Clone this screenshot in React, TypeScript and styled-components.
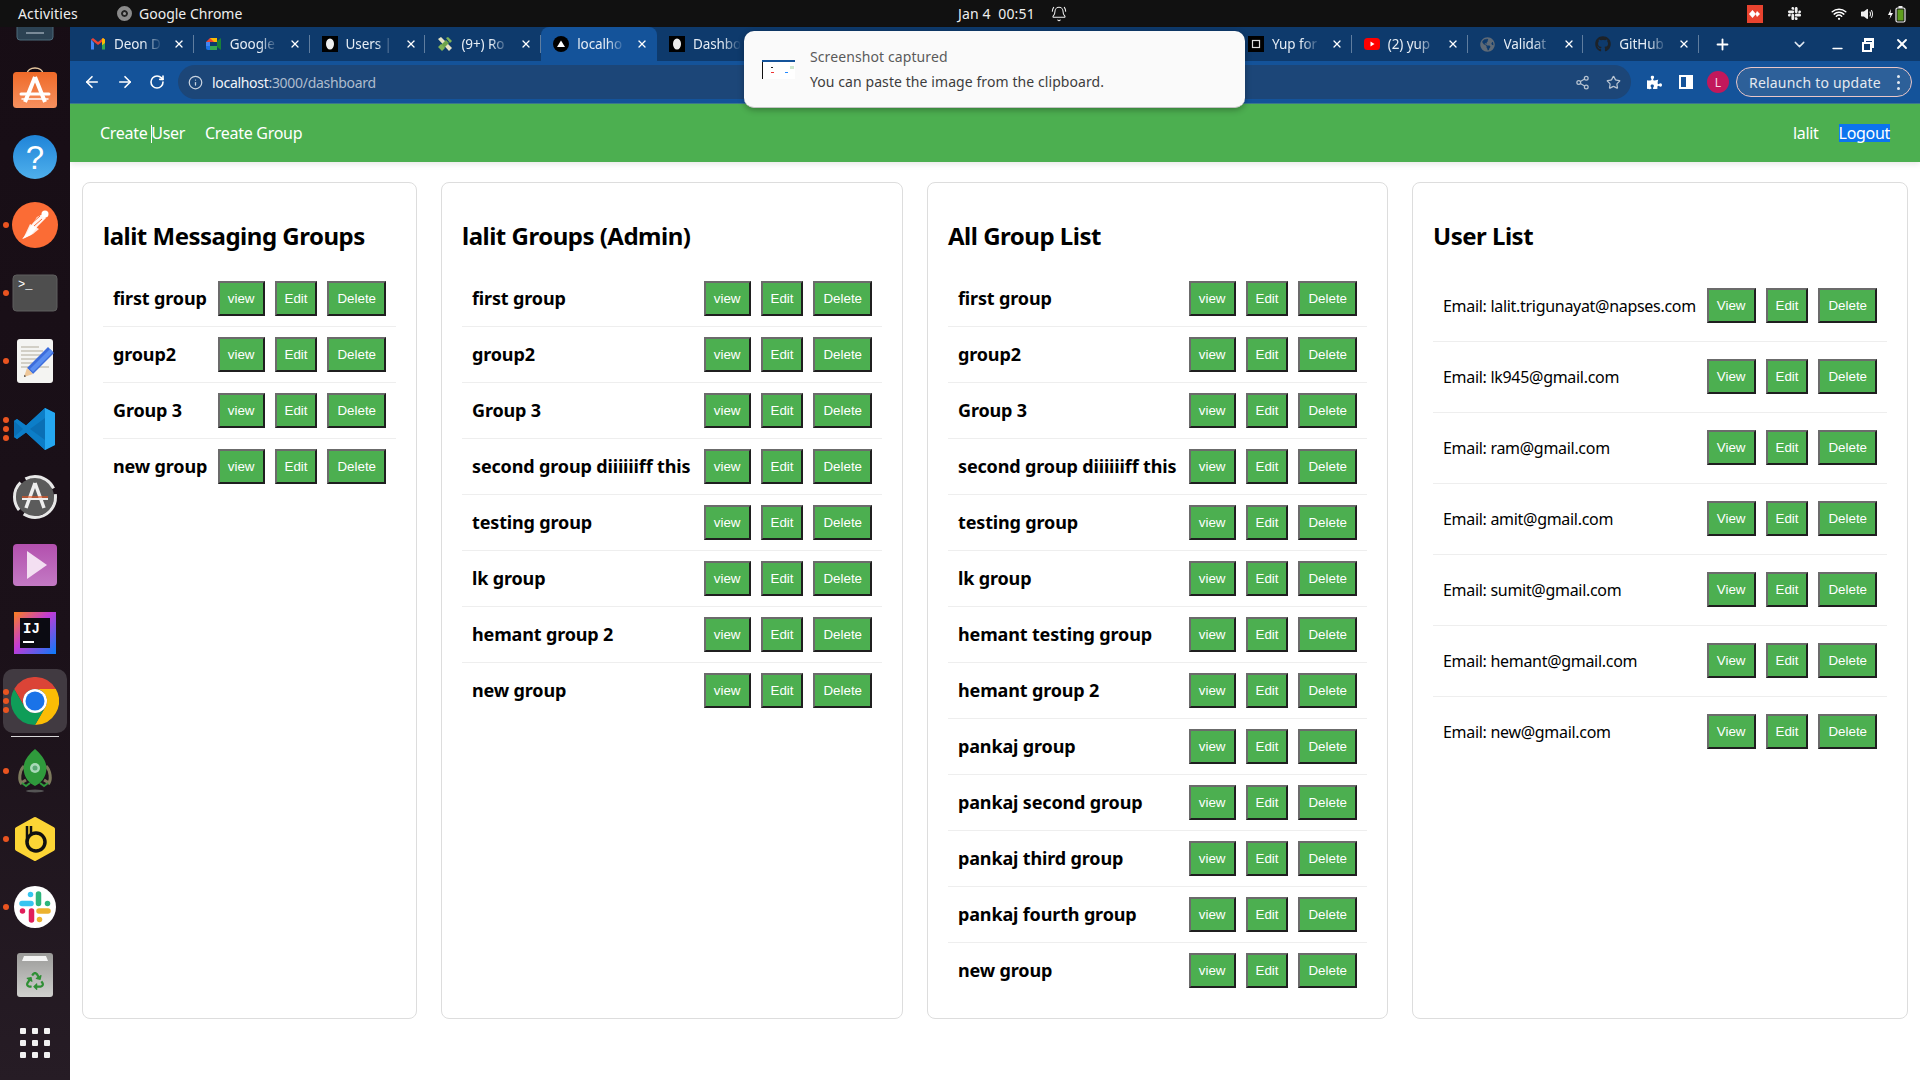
import React from "react";
import styled, { createGlobalStyle } from "styled-components";
import { ArrowLeft, ArrowRight, RotateCw, Info, Share2, Star, X, Plus, ChevronDown, Minus, BellRing } from "lucide-react";
import { FaGithub, FaPuzzlePiece, FaSlack, FaRecycle, FaGlobeAmericas } from "react-icons/fa";
import { IoWifi, IoVolumeMedium } from "react-icons/io5";

const UI_FONT = `"Noto Sans", "Open Sans", sans-serif`;

const GlobalStyle = createGlobalStyle`
  html, body {
    margin: 0;
    padding: 0;
    width: 1920px;
    height: 1080px;
    overflow: hidden;
    background: #fff;
    font-family: ${UI_FONT};
  }
  * { box-sizing: border-box; }
`;

const messaging = ["first group", "group2", "Group 3", "new group"];
const admin = ["first group", "group2", "Group 3", "second group diiiiiiff this", "testing group", "lk group", "hemant group 2", "new group"];
const all = ["first group", "group2", "Group 3", "second group diiiiiiff this", "testing group", "lk group", "hemant testing group", "hemant group 2", "pankaj group", "pankaj second group", "pankaj third group", "pankaj fourth group", "new group"];
const users = ["lalit.trigunayat@napses.com", "lk945@gmail.com", "ram@gmail.com", "amit@gmail.com", "sumit@gmail.com", "hemant@gmail.com", "new@gmail.com"];

/* ---------- favicons ---------- */
const Gmail = () => (
  <svg width="16" height="16" viewBox="0 0 16 16">
    <path d="M1 3.500v10h3V7z" fill="#4285f4" />
    <path d="M15 3.500v10h-3V7z" fill="#34a853" />
    <path d="M1 3.500 8 9l7-5.500L13 2 8 6 3 2z" fill="#ea4335" />
    <path d="M13 2l2 1.500V7l-3 2.200V3z" fill="#fbbc04" />
  </svg>
);
const Meet = () => (
  <svg width="16" height="16" viewBox="0 0 16 16">
    <path d="M4 2h7v4H4v4H0V6z" fill="#ea4335" />
    <path d="M4 2h7v4H8z" fill="#fbbc04" />
    <path d="M0 6h4v4H0z" fill="#4285f4" />
    <path d="M0 10h4v4H2a2 2 0 0 1-2-2z" fill="#1a73e8" />
    <path d="M4 10h7v4H4z" fill="#34a853" />
    <path d="M11 5l4-3v12l-4-3z" fill="#188038" />
  </svg>
);
const Egg = () => (
  <svg width="16" height="16" viewBox="0 0 16 16">
    <rect width="16" height="16" fill="#000" />
    <ellipse cx="8" cy="8" rx="4" ry="5.500" fill="#eee" />
  </svg>
);
const Round = () => (
  <svg width="16" height="16" viewBox="0 0 16 16">
    <path d="M1 3l3-2 11 11-3 3z" fill="#e8e4c4" />
    <path d="M4 9l5-5 3 3-5 5z" fill="#6ea34a" />
    <path d="M1 11l3-3 4 4-3 3zM9 2l2-1 4 4-2 2z" fill="#7fb356" />
  </svg>
);
const NextDot = () => (
  <svg width="16" height="16" viewBox="0 0 16 16">
    <circle cx="8" cy="8" r="8" fill="#000" />
    <path d="M8 4.500 12 11H4z" fill="#fff" />
  </svg>
);
const Yup = () => (
  <svg width="16" height="16" viewBox="0 0 16 16">
    <rect width="16" height="16" fill="#000" />
    <rect x="4.500" y="4.500" width="7" height="7" fill="none" stroke="#ddd" strokeWidth="1.200" />
  </svg>
);
const YouTube = () => (
  <svg width="16" height="16" viewBox="0 0 16 16">
    <rect y="2" width="16" height="12" rx="3.500" fill="#f00" />
    <path d="M6.500 5.500 10.500 8l-4 2.500z" fill="#fff" />
  </svg>
);

// tabs 6 to 9 sit behind the screenshot toast, so they carry no title
const tabs = [
  { title: "Deon D", icon: <Gmail /> },
  { title: "Google", icon: <Meet /> },
  { title: "Users |", icon: <Egg /> },
  { title: "(9+) Ro", icon: <Round /> },
  { title: "localho", icon: <NextDot />, active: true },
  { title: "Dashbo", icon: <Egg /> },
  { title: "", icon: <Egg /> },
  { title: "", icon: <Egg /> },
  { title: "", icon: <Egg /> },
  { title: "", icon: <Egg /> },
  { title: "Yup for", icon: <Yup /> },
  { title: "(2) yup", icon: <YouTube /> },
  { title: "Validat", icon: <FaGlobeAmericas size={15} color="#5f6a76" /> },
  { title: "GitHub", icon: <FaGithub size={16} color="#1d2228" /> },
];

/* ---------- dock icons ---------- */
const StoreIcon = () => (
  <svg width="46" height="46" viewBox="0 0 46 46">
    <defs>
      <linearGradient id="store" x1="0" y1="0" x2="0" y2="1">
        <stop offset="0" stopColor="#ef6a29" />
        <stop offset="1" stopColor="#f6905f" />
      </linearGradient>
    </defs>
    <path d="M15 8c0-8 16-8 16 0" fill="none" stroke="#e9c9a0" strokeWidth="1.500" />
    <rect x="1" y="6" width="44" height="36" rx="3.500" fill="url(#store)" />
    <path d="M23 11 13 36M23 11l10 25" stroke="#fff" strokeWidth="4" fill="none" />
    <path d="M9 28h28" stroke="#fff" strokeWidth="3" strokeLinecap="round" />
    <path d="M10 33h26" stroke="#fff" strokeWidth="1.500" strokeLinecap="round" />
  </svg>
);
const HelpIcon = () => (
  <svg width="46" height="46" viewBox="0 0 46 46">
    <defs>
      <linearGradient id="help" x1="0" y1="0" x2="0" y2="1">
        <stop offset="0" stopColor="#1f84d8" />
        <stop offset="1" stopColor="#4fb0ec" />
      </linearGradient>
    </defs>
    <circle cx="23" cy="23" r="22" fill="url(#help)" />
    <text x="23" y="35" textAnchor="middle" fontFamily="Liberation Sans, sans-serif" fontSize="33" fill="#fff">?</text>
  </svg>
);
const PostmanIcon = () => (
  <svg width="46" height="46" viewBox="0 0 46 46">
    <circle cx="23" cy="23" r="23" fill="#fb6c35" />
    <path d="M10 37l9-4 7-9 8-8-3-4-6 3-7 10-3 6z" fill="#fff" opacity="0.92" />
    <path d="M18 22l9 5-6 5-10 5z" fill="#fff" opacity="0.85" />
    <circle cx="33" cy="12" r="3.500" fill="#fff" />
    <path d="M20 21l8-7M22 24l8-7" stroke="#fb6c35" strokeWidth="1" />
  </svg>
);
const TerminalIcon = () => (
  <svg width="46" height="46" viewBox="0 0 46 46">
    <rect x="1" y="5" width="44" height="36" rx="3.500" fill="#4e4e4e" stroke="#5e5e5e" />
    <text x="6" y="18" fontFamily="Liberation Mono, monospace" fontSize="12" fill="#fff">&gt;_</text>
  </svg>
);
const EditorIcon = () => (
  <svg width="46" height="46" viewBox="0 0 46 46">
    <rect x="5" y="1" width="36" height="44" rx="3" fill="#f4f4f2" />
    <path d="M9 9h18M9 13h22M9 17h20M9 21h16M9 25h14M9 29h10M24 29h13" stroke="#c6c2b8" strokeWidth="1.500" />
    <path d="M36 9l6 6-21 21-6-6z" fill="#3c6cdc" />
    <path d="M38 11l3 3-20 20-3-3z" fill="#5a8ef0" />
    <path d="M15 30l6 6-9 3z" fill="#eec79a" />
    <path d="M12 39l2-.700-1.500-1.500z" fill="#333" />
  </svg>
);
const VscodeIcon = () => (
  <svg width="44" height="44" viewBox="0 0 44 44">
    <path d="M32 1 42 6v32l-10 5-19-17.500L4 32l-3-2V14l3-2 9 6.500z" fill="#0a6fb5" />
    <path d="M32 1 13 18.500 4 12l-3 2 9 8-9 8 3 2 9-6.500L32 43V33L17 22 32 11z" fill="#0c7ec8" />
    <path d="M32 1 42 6v32l-10 5z" fill="#25a7f0" />
  </svg>
);
const UpdaterIcon = () => (
  <svg width="46" height="46" viewBox="0 0 46 46">
    <circle cx="23" cy="23" r="19" fill="#5b5b5b" />
    <circle cx="23" cy="23" r="20.500" fill="none" stroke="#e8e8e8" strokeWidth="3" strokeDasharray="44 6 30 6 33 6" />
    <path d="M23 9 14 34M23 9l9 25" stroke="#eee" strokeWidth="3.500" fill="none" />
    <path d="M10 25h26" stroke="#eee" strokeWidth="2" />
    <path d="M10 23h26" stroke="#e95420" strokeWidth="1.200" />
  </svg>
);
const VideoIcon = () => (
  <svg width="46" height="46" viewBox="0 0 46 46">
    <defs>
      <linearGradient id="video" x1="0" y1="0" x2="0" y2="1">
        <stop offset="0" stopColor="#b350ae" />
        <stop offset="1" stopColor="#c37ac4" />
      </linearGradient>
    </defs>
    <rect x="1" y="2" width="44" height="42" rx="4" fill="url(#video)" />
    <path d="M15 9l20 14-20 14z" fill="#f3dff2" />
  </svg>
);
const IdeaIcon = () => (
  <svg width="42" height="42" viewBox="0 0 42 42">
    <defs>
      <linearGradient id="idea" x1="0" y1="0" x2="1" y2="1">
        <stop offset="0" stopColor="#fc801d" />
        <stop offset="0.450" stopColor="#c23bd6" />
        <stop offset="1" stopColor="#087cfa" />
      </linearGradient>
    </defs>
    <rect width="42" height="42" fill="url(#idea)" />
    <rect x="6" y="6" width="30" height="30" fill="#0b0b12" />
    <text x="9" y="21" fontFamily="Liberation Mono, monospace" fontWeight="700" fontSize="14" fill="#fff">IJ</text>
    <rect x="9" y="29" width="11" height="2" fill="#fff" />
  </svg>
);
const ChromeIcon = ({ size = 48 }: { size?: number }) => (
  <svg width={size} height={size} viewBox="0 0 48 48">
    <path d="M24 12h20.800A24 24 0 0 0 3.200 12l10.400 18A12 12 0 0 1 24 12z" fill="#db4437" />
    <path d="M44.800 12H24a12 12 0 0 1 10.400 18L24 48a24 24 0 0 0 20.800-36z" fill="#fbbc05" />
    <path d="M3.200 12l10.400 18a12 12 0 0 0 20.800 0L24 48A24 24 0 0 1 3.200 12z" fill="#0f9d58" />
    <circle cx="24" cy="24" r="12" fill="#fff" />
    <circle cx="24" cy="24" r="9.500" fill="#1a73e8" />
  </svg>
);
const RocketIcon = () => (
  <svg width="46" height="46" viewBox="0 0 46 46">
    <ellipse cx="23" cy="43" rx="9" ry="1.500" fill="#555" />
    <path d="M12 18c-5 5-5 14-3 17l5-3M34 18c5 5 5 14 3 17l-5-3" fill="none" stroke="#7d7a5c" strokeWidth="3" />
    <path d="M23 1c8 7 13 14 11 23-1 6-5 11-11 14-6-3-10-8-11-14C10 15 15 8 23 1z" fill="#2f9a3c" />
    <circle cx="23" cy="20" r="5" fill="#a9d9b8" />
    <circle cx="23" cy="20" r="2.500" fill="#5aa874" />
    <path d="M10 35l4 3 4-3M36 35l-4 3-4-3" fill="none" stroke="#2f9a3c" strokeWidth="2" />
  </svg>
);
const BeeIcon = () => (
  <svg width="46" height="46" viewBox="0 0 46 46">
    <path d="M23 3 41 13v20L23 43 5 33V13z" fill="#fcd535" stroke="#fcd535" strokeWidth="4" strokeLinejoin="round" />
    <circle cx="24" cy="26" r="9" fill="none" stroke="#111" strokeWidth="3.500" />
    <path d="M15 26V10M19 17v-7" stroke="#111" strokeWidth="2.500" />
  </svg>
);
const SlackIcon = () => (
  <svg width="44" height="44" viewBox="0 0 44 44">
    <circle cx="22" cy="22" r="21" fill="#fff" />
    <g strokeWidth="5.500" strokeLinecap="round">
      <path d="M9 18.500h9" stroke="#36c5f0" />
      <path d="M17.500 9.500v0" stroke="#36c5f0" />
      <path d="M25.500 9v9.500" stroke="#2eb67d" />
      <path d="M34.500 18.500v0" stroke="#2eb67d" />
      <path d="M26 26h9" stroke="#ecb22e" />
      <path d="M26.500 34.500v0" stroke="#ecb22e" />
      <path d="M18.500 26v9" stroke="#e01e5a" />
      <path d="M9.500 26v0" stroke="#e01e5a" />
    </g>
  </svg>
);
const TrashIcon = () => (
  <svg width="46" height="46" viewBox="0 0 46 46">
    <defs>
      <linearGradient id="can" x1="0" y1="0" x2="0" y2="1">
        <stop offset="0" stopColor="#9a9a98" />
        <stop offset="1" stopColor="#d0d0ce" />
      </linearGradient>
    </defs>
    <rect x="5" y="1" width="36" height="44" rx="3" fill="url(#can)" />
    <path d="M10 9l2-5h22l2 5z" fill="#f4f4f4" />
    <FaRecycle x={14} y={20} size={18} color="#2f8f35" />
  </svg>
);
const GridIcon = () => (
  <svg width="32" height="32" viewBox="0 0 32 32" fill="#f2f2f2">
    {[1, 13, 25].flatMap((y) =>
      [1, 13, 25].map((x) => <rect key={`${x}-${y}`} x={x} y={y} width="6" height="6" rx="1" />)
    )}
  </svg>
);
const FilesIcon = () => (
  <svg width="46" height="46" viewBox="0 0 46 46">
    <rect x="5" y="-6" width="36" height="48" rx="3" fill="#2c4253" stroke="#4d6a7a" />
    <rect x="14" y="34" width="18" height="2" fill="#7a8a98" />
  </svg>
);

const dock = [
  { icon: <FilesIcon /> },
  { icon: <StoreIcon /> },
  { icon: <HelpIcon /> },
  { icon: <PostmanIcon />, dots: 1 },
  { icon: <TerminalIcon />, dots: 1 },
  { icon: <EditorIcon />, dots: 1 },
  { icon: <VscodeIcon />, dots: 3 },
  { icon: <UpdaterIcon /> },
  { icon: <VideoIcon /> },
  { icon: <IdeaIcon /> },
  { icon: <ChromeIcon />, dots: 3, active: true },
];
const dockAfter = [
  { icon: <RocketIcon />, dots: 1 },
  { icon: <BeeIcon />, dots: 1 },
  { icon: <SlackIcon />, dots: 1 },
  { icon: <TrashIcon /> },
  { icon: <GridIcon /> },
];

const DockEntry = ({ icon, dots = 0, active = false }: { icon: React.ReactNode; dots?: number; active?: boolean }) => (
  <DockItem $active={active}>
    {dots > 0 && (
      <Dots>
        {Array.from({ length: dots }).map((_, i) => (
          <Dot key={i} />
        ))}
      </Dots>
    )}
    {icon}
  </DockItem>
);

const Actions = ({ view }: { view: string }) => (
  <ButtonRow>
    <ActionButton>{view}</ActionButton>
    <ActionButton>Edit</ActionButton>
    <ActionButton>Delete</ActionButton>
  </ButtonRow>
);

const GroupCard = ({ title, items }: { title: string; items: string[] }) => (
  <Card>
    <CardTitle>{title}</CardTitle>
    <List>
      {items.map((name, i) => (
        <GroupRow key={i}>
          <GroupName>{name}</GroupName>
          <Actions view="view" />
        </GroupRow>
      ))}
    </List>
  </Card>
);

export default function App() {
  return (
    <Screen>
      <GlobalStyle />
      <TopBar>
        <TopLeft>
          <Activities>Activities</Activities>
          <AppName>
            <ChromeMono />
            Google Chrome
          </AppName>
        </TopLeft>
        <Clock>Jan 4&nbsp;&nbsp;00:51</Clock>
        <BellRing size={16} color="#eee" strokeWidth={1.6} style={{ marginLeft: 18 }} />
        <Tray>
          <AnyDesk>
            <svg width="12" height="10" viewBox="0 0 12 10" fill="#fff">
              <path d="M3.500 1 7 5 3.500 9 0 5z" />
              <path d="M8 2l3 3-3 3-1.500-3z" />
            </svg>
          </AnyDesk>
          <FaSlack size={15} color="#eee" style={{ marginLeft: 24 }} />
          <IoWifi size={18} color="#fff" style={{ marginLeft: 28 }} />
          <IoVolumeMedium size={16} color="#eee" style={{ marginLeft: 11 }} />
          <svg width="18" height="18" viewBox="0 0 18 18" style={{ marginLeft: 13 }}>
            <path d="M3 4 0 10h2.500L1.500 14 5 8H2.500z" fill="#fff" />
            <rect x="8" y="3" width="9" height="14" rx="1.500" fill="none" stroke="#eee" strokeWidth="1.200" />
            <rect x="10.500" y="1" width="4" height="2" fill="#eee" />
            <rect x="9.500" y="4.500" width="6" height="11" fill="#5f9e1e" />
          </svg>
        </Tray>
      </TopBar>

      <Desktop>
        <Dock>
          {dock.map((d, i) => (
            <DockEntry key={i} {...d} />
          ))}
          <DockSeparator />
          {dockAfter.map((d, i) => (
            <DockEntry key={i} {...d} />
          ))}
        </Dock>

        <Browser>
          <TabStrip>
            {tabs.map((t, i) => (
              <Tab key={i} $active={!!t.active}>
                <Favicon>{t.icon}</Favicon>
                <TabTitle>{t.title}</TabTitle>
                <X size={12} color="#fff" strokeWidth={2.6} />
              </Tab>
            ))}
            <NewTab>
              <Plus size={17} color="#fff" strokeWidth={2.6} />
            </NewTab>
            <WindowControls>
              <ChevronDown size={17} color="#dfe7f1" />
              <Minus size={15} color="#fff" strokeWidth={2.6} style={{ marginTop: 8, marginLeft: 22 }} />
              <RestoreGlyph />
              <X size={16} color="#fff" strokeWidth={2.8} style={{ marginLeft: 20 }} />
            </WindowControls>
          </TabStrip>

          <Toolbar>
            <NavIcons>
              <ArrowLeft size={18} color="#fff" strokeWidth={2.2} />
              <ArrowRight size={18} color="#fff" strokeWidth={2.2} />
              <RotateCw size={16} color="#fff" strokeWidth={2.4} />
            </NavIcons>
            <Omnibox>
              <Info size={15} color="#c9d3df" />
              <Url>
                localhost<UrlDim>:3000/dashboard</UrlDim>
              </Url>
              <OmniIcons>
                <Share2 size={15} color="#b8c4d2" />
                <Star size={15} color="#b8c4d2" strokeWidth={2} />
              </OmniIcons>
            </Omnibox>
            <FaPuzzlePiece size={15} color="#fff" style={{ marginLeft: 16 }} />
            <PanelGlyph />
            <Avatar>L</Avatar>
            <Relaunch>
              Relaunch to update
              <Kebab>
                <i />
                <i />
                <i />
              </Kebab>
            </Relaunch>
          </Toolbar>

          <NavBar>
            <NavLinks>
              <span>
                Create <Caret />
                User
              </span>
              <span>Create Group</span>
            </NavLinks>
            <NavLinks>
              <span>lalit</span>
              <Selected>Logout</Selected>
            </NavLinks>
          </NavBar>

          <Board>
            <GroupCard title="lalit Messaging Groups" items={messaging} />
            <GroupCard title="lalit Groups (Admin)" items={admin} />
            <GroupCard title="All Group List" items={all} />
            <Card>
              <CardTitle>User List</CardTitle>
              <List>
                {users.map((u, i) => (
                  <UserRow key={i}>
                    <UserEmail>Email: {u}</UserEmail>
                    <Actions view="View" />
                  </UserRow>
                ))}
              </List>
            </Card>
          </Board>
        </Browser>
      </Desktop>

      <Toast>
        <svg width="33" height="19" viewBox="0 0 33 19">
          <rect width="33" height="19" fill="#fff" />
          <rect width="33" height="2" fill="#14539a" />
          <rect y="2" width="1" height="17" fill="#111" />
          <rect x="9" y="7" width="2" height="1" fill="#222" />
          <rect x="9" y="12" width="3" height="1" fill="#e33" />
          <rect x="23" y="12" width="3" height="1" fill="#28f" />
          <rect x="28" y="6" width="4" height="3" fill="#cfe8cf" />
        </svg>
        <ToastText>
          <ToastTitle>Screenshot captured</ToastTitle>
          <ToastBody>You can paste the image from the clipboard.</ToastBody>
        </ToastText>
      </Toast>
    </Screen>
  );
}

const Screen = styled.div`
  position: relative;
  width: 1920px;
  height: 1080px;
  display: flex;
  flex-direction: column;
  overflow: hidden;
`;

const TopBar = styled.div`
  height: 27px;
  flex: none;
  background: #111;
  color: #eee;
  font-size: 14px;
  display: flex;
  align-items: center;
`;
const TopLeft = styled.div`
  width: 958px;
  display: flex;
  align-items: center;
  padding-left: 18px;
`;
const Activities = styled.span`
  width: 99px;
  letter-spacing: 0.15px;
`;
const AppName = styled.span`
  display: flex;
  align-items: center;
  gap: 7px;
`;
const ChromeMono = styled.i`
  width: 15px;
  height: 15px;
  border-radius: 50%;
  background: #999;
  border: 4px solid #8a8a8a;
  box-shadow: inset 0 0 0 2px #222;
`;
const Clock = styled.span`
  font-size: 14px;
  width: 75px;
  letter-spacing: 0.15px;
  white-space: nowrap;
`;
const Tray = styled.div`
  margin-left: auto;
  padding-right: 14px;
  display: flex;
  align-items: center;
`;
const AnyDesk = styled.div`
  width: 16px;
  height: 18px;
  background: #e8432f;
  display: flex;
  align-items: center;
  justify-content: center;
`;

const Desktop = styled.div`
  flex: 1;
  min-height: 0;
  display: flex;
`;
const Dock = styled.div`
  width: 70px;
  flex: none;
  height: calc(100% + 40px);
  margin-top: -40px;
  background: linear-gradient(180deg, #170d15 0%, #1b1119 60%, #261c25 100%);
  display: flex;
  flex-direction: column;
  align-items: center;
  clip-path: inset(40px 0 0 0);
`;
const DockItem = styled.div<{ $active: boolean }>`
  position: relative;
  width: 64px;
  height: 68px;
  flex: none;
  display: flex;
  align-items: center;
  justify-content: center;
  &::before {
    content: "";
    position: absolute;
    inset: 2px 0;
    border-radius: 10px;
    background: ${(p) => (p.$active ? "#413a41" : "transparent")};
  }
  svg {
    position: relative;
  }
`;
const Dots = styled.div`
  position: absolute;
  z-index: 1;
  left: 0;
  top: 0;
  bottom: 0;
  display: flex;
  flex-direction: column;
  justify-content: center;
  gap: 3px;
`;
const Dot = styled.i`
  width: 6px;
  height: 6px;
  border-radius: 50%;
  background: #e95420;
`;
const DockSeparator = styled.div`
  width: 48px;
  height: 1px;
  margin: 1px 0 0;
  flex: none;
  background: #d8d6d8;
`;

const Browser = styled.div`
  flex: 1;
  min-width: 0;
  display: flex;
  flex-direction: column;
  background: #fff;
`;
const TabStrip = styled.div`
  height: 34px;
  flex: none;
  padding-left: 8px;
  background: #0e3a6c;
  display: flex;
`;
const Tab = styled.div<{ $active: boolean }>`
  position: relative;
  width: 115.800px;
  height: 34px;
  flex: none;
  padding: 0 0 0 12px;
  display: flex;
  align-items: center;
  color: #e6edf5;
  font-size: 13.500px;
  letter-spacing: -0.1px;
  border-radius: 8px 8px 0 0;
  background: ${(p) => (p.$active ? "#14539a" : "transparent")};
  svg {
    flex: none;
  }
  &::after {
    content: "";
    position: absolute;
    right: 0;
    top: 8px;
    height: 18px;
    width: 1px;
    background: ${(p) => (p.$active ? "transparent" : "#5f7d9f")};
  }
`;
const Favicon = styled.span`
  width: 16px;
  height: 16px;
  flex: none;
  display: flex;
  align-items: center;
  justify-content: center;
`;
const TabTitle = styled.span`
  flex: none;
  width: 48px;
  margin: 0 11px 0 8px;
  overflow: hidden;
  white-space: nowrap;
  -webkit-mask-image: linear-gradient(90deg, #000 62%, transparent 100%);
  mask-image: linear-gradient(90deg, #000 62%, transparent 100%);
`;
const NewTab = styled.div`
  width: 46px;
  display: flex;
  align-items: center;
  justify-content: center;
`;
const WindowControls = styled.div`
  margin-left: auto;
  padding-right: 10px;
  display: flex;
  align-items: center;
`;
const RestoreGlyph = styled.i`
  position: relative;
  width: 10px;
  height: 10px;
  margin-left: 19px;
  margin-top: -2px;
  border: 2px solid #fff;
  border-top-width: 3px;
  &::before {
    content: "";
    position: absolute;
    left: -4px;
    top: 1px;
    width: 6px;
    height: 6px;
    background: #0e3a6c;
    border: 2px solid #fff;
  }
`;

const Toolbar = styled.div`
  height: 43px;
  flex: none;
  background: #14539a;
  border-bottom: 1px solid #3d7a8f;
  padding: 4px 8px 4px 0;
  display: flex;
  align-items: center;
`;
const NavIcons = styled.div`
  width: 108px;
  padding-left: 13px;
  display: flex;
  align-items: center;
  gap: 15px;
  flex: none;
`;
const Omnibox = styled.div`
  width: 1453px;
  height: 34px;
  flex: none;
  border-radius: 17px;
  background: #1c4678;
  padding: 0 10px 0 10px;
  display: flex;
  align-items: center;
  font-size: 14px;
`;
const Url = styled.span`
  margin-left: 9px;
  color: #f2f5f9;
  letter-spacing: -0.3px;
`;
const UrlDim = styled.span`
  color: #aebccd;
`;
const OmniIcons = styled.div`
  margin-left: auto;
  display: flex;
  align-items: center;
  gap: 16px;
`;
const PanelGlyph = styled.i`
  width: 14px;
  height: 14px;
  margin-left: 17px;
  border: 2px solid #fff;
  border-right-width: 7px;
  background: #14539a;
`;
const Avatar = styled.div`
  width: 22px;
  height: 22px;
  margin-left: 14px;
  border-radius: 50%;
  background: #c2185b;
  color: #f7d9e5;
  font-size: 12px;
  display: flex;
  align-items: center;
  justify-content: center;
`;
const Relaunch = styled.div`
  width: 176px;
  height: 30px;
  margin-left: 7px;
  flex: none;
  border: 1px solid #e9c6c8;
  border-radius: 15px;
  background: #2d6099;
  color: #e4e9f0;
  font-size: 14px;
  letter-spacing: 0.2px;
  padding-left: 12px;
  display: flex;
  align-items: center;
  white-space: nowrap;
`;
const Kebab = styled.span`
  margin-left: auto;
  margin-right: 11px;
  display: flex;
  flex-direction: column;
  gap: 3px;
  i {
    width: 3px;
    height: 3px;
    border-radius: 50%;
    background: #e4e9f0;
  }
`;

const NavBar = styled.div`
  height: 58px;
  flex: none;
  background: #4caf50;
  color: #fff;
  padding: 0 30px;
  font-size: 16px;
  letter-spacing: -0.3px;
  display: flex;
  justify-content: space-between;
  align-items: center;
  box-shadow: 0 2px 6px rgba(0, 0, 0, 0.1);
`;
const NavLinks = styled.div`
  display: flex;
  align-items: center;
  gap: 20px;
`;
const Caret = styled.i`
  display: inline-block;
  width: 1px;
  height: 18px;
  margin-right: -1px;
  background: #fff;
  vertical-align: -4px;
`;
const Selected = styled.span`
  background: #0b74ee;
  line-height: 18px;
`;

const Board = styled.div`
  flex: 1;
  padding: 20px 12px 62px;
  display: grid;
  grid-template-columns: 335px 462px 461px 496px;
  gap: 24px;
  min-height: 0;
`;
const Card = styled.div`
  background: #fff;
  border: 1px solid #ddd;
  border-radius: 8px;
  padding: 20px;
  min-width: 0;
`;
const CardTitle = styled.h2`
  margin: 19px 0 22px;
  font-size: 24px;
  line-height: 27px;
  font-weight: 700;
  color: #000;
  letter-spacing: -0.5px;
  white-space: nowrap;
`;
const List = styled.div`
  display: flex;
  flex-direction: column;
`;
const GroupRow = styled.div`
  display: flex;
  justify-content: space-between;
  align-items: center;
  padding: 10px;
  border-bottom: 1px solid #eee;
  &:last-child {
    border-bottom: none;
  }
`;
const UserRow = styled(GroupRow)`
  padding: 17px 10px 18px;
`;
const GroupName = styled.span`
  font-size: 18px;
  font-weight: 700;
  padding-bottom: 2px;
  color: #000;
  letter-spacing: -0.15px;
  white-space: nowrap;
`;
const UserEmail = styled.span`
  font-size: 16px;
  color: #000;
  letter-spacing: -0.3px;
  white-space: nowrap;
`;
const ButtonRow = styled.div`
  display: flex;
  gap: 10px;
  flex: none;
`;
const ActionButton = styled.button`
  height: 35px;
  padding: 8px;
  background: #4caf50;
  color: #fff;
  font-family: "Liberation Sans", Arial, sans-serif;
  font-size: 13.333px;
  line-height: 15px;
  border-width: 2px;
  border-style: solid;
  border-color: #6b6b6b #1f1f1f #1f1f1f #6b6b6b;
`;

const Toast = styled.div`
  position: absolute;
  left: 744px;
  top: 31px;
  width: 501px;
  height: 77px;
  padding: 0 18px;
  display: flex;
  align-items: center;
  gap: 15px;
  background: #fafafa;
  border-radius: 10px;
  border-bottom: 1px solid #c4c4c4;
  box-shadow: 0 2px 6px rgba(0, 0, 0, 0.3);
`;
const ToastText = styled.div`
  display: flex;
  flex-direction: column;
  gap: 6px;
  font-size: 14px;
`;
const ToastTitle = styled.span`
  color: #5a5a5a;
  letter-spacing: 0.1px;
`;
const ToastBody = styled.span`
  color: #3d3d3d;
  letter-spacing: 0.08px;
`;
